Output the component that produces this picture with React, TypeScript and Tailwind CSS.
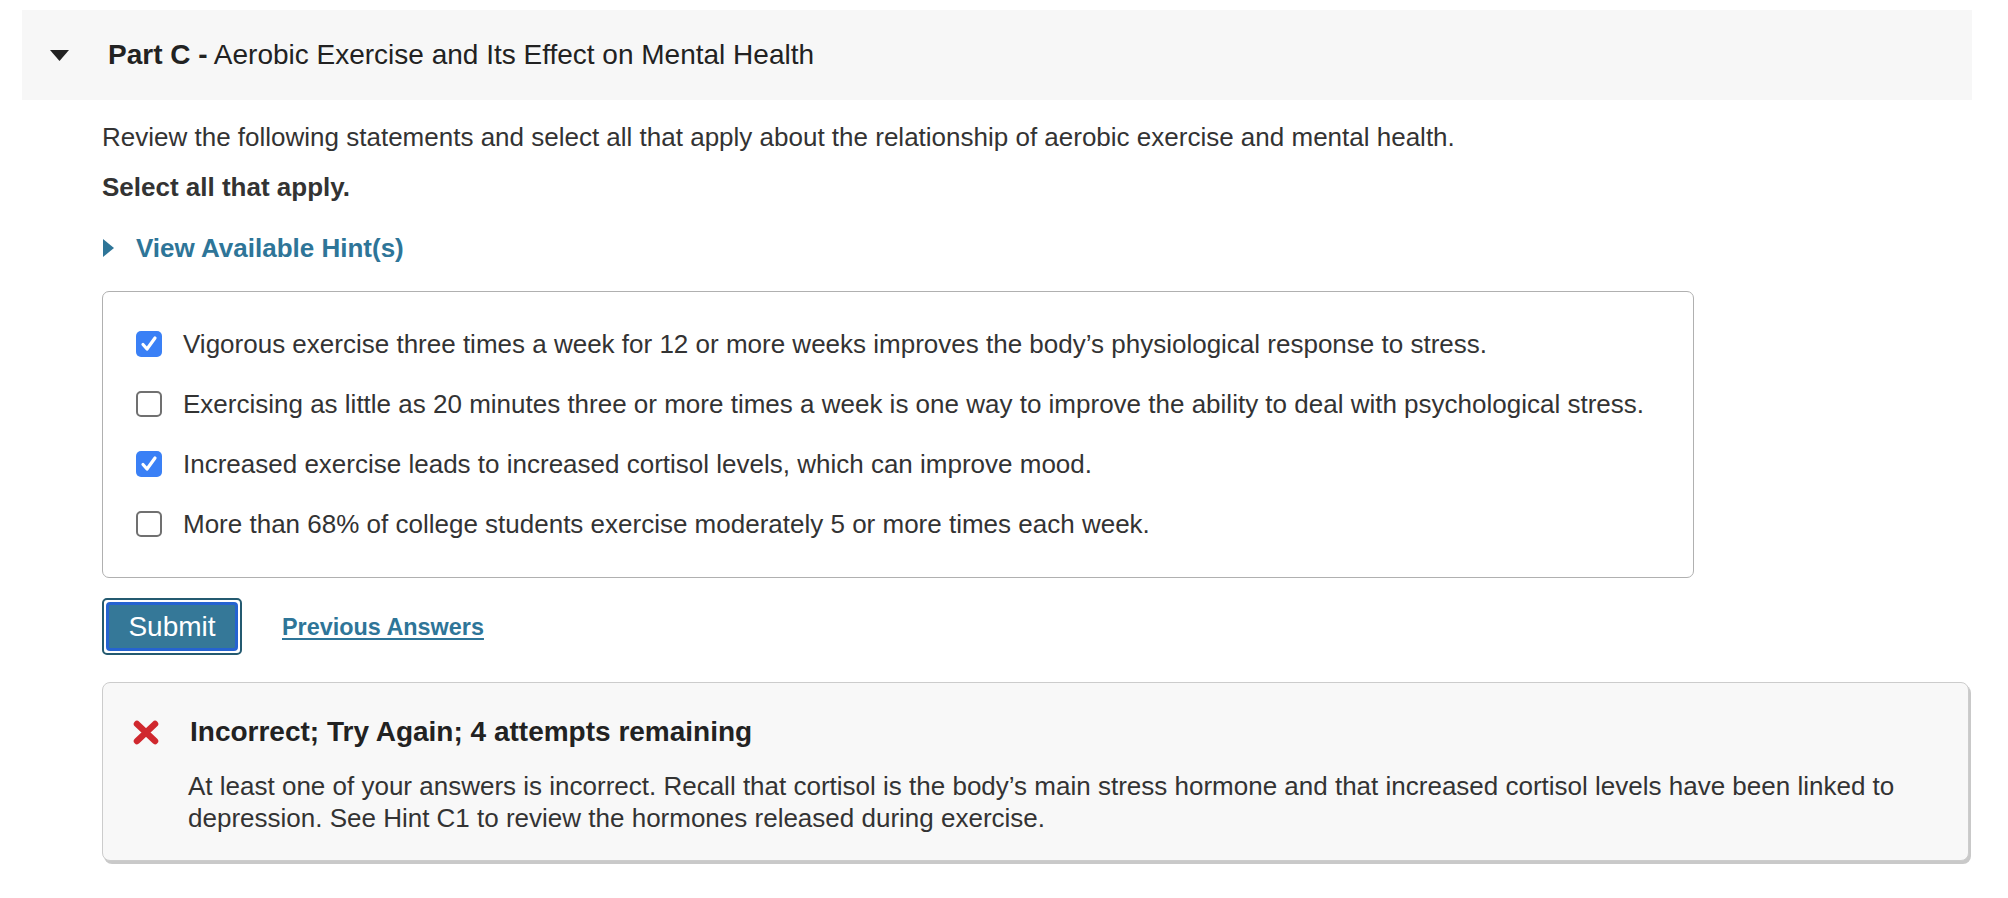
import React from "react";

const options = [
  {
    text: "Vigorous exercise three times a week for 12 or more weeks improves the body\u2019s physiological response to stress.",
    checked: true,
  },
  {
    text: "Exercising as little as 20 minutes three or more times a week is one way to improve the ability to deal with psychological stress.",
    checked: false,
  },
  {
    text: "Increased exercise leads to increased cortisol levels, which can improve mood.",
    checked: true,
  },
  {
    text: "More than 68% of college students exercise moderately 5 or more times each week.",
    checked: false,
  },
];

function Checkbox({ checked }: { checked: boolean }) {
  if (checked) {
    return (
      <span className="flex h-[26px] w-[26px] shrink-0 items-center justify-center rounded-[5px] bg-[#3a80f6]">
        <svg viewBox="0 0 26 26" className="h-[26px] w-[26px]">
          <path
            d="M7 13.5l4 4.5 8-11"
            fill="none"
            stroke="white"
            strokeWidth="3.2"
            strokeLinecap="round"
            strokeLinejoin="round"
          />
        </svg>
      </span>
    );
  }
  return (
    <span className="h-[26px] w-[26px] shrink-0 rounded-[5px] border-[2px] border-[#707070] bg-white" />
  );
}

export default function App() {
  return (
    <div
      className="min-h-[898px] w-full bg-white pt-[10px] text-[#333333]"
      style={{ fontFamily: '"Liberation Sans", Arial, Helvetica, sans-serif' }}
    >
      {/* Part header */}
      <div className="ml-[22px] mr-[36px] flex h-[90px] items-center bg-[#f7f7f7]">
        <svg viewBox="0 0 19 11" className="ml-[28px] h-[11px] w-[19px]">
          <path d="M0 0h19L9.5 11z" fill="#222222" />
        </svg>
        <h2 className="ml-[39px] text-[28px] leading-[32px] text-[#222222]">
          <span className="font-bold">Part C -</span> Aerobic Exercise and Its
          Effect on Mental Health
        </h2>
      </div>

      <div className="pl-[102px]">
        <p className="mt-[21px] text-[26px] leading-[32px]">
          Review the following statements and select all that apply about the
          relationship of aerobic exercise and mental health.
        </p>
        <p className="mt-[18px] text-[26px] font-bold leading-[32px]">
          Select all that apply.
        </p>

        {/* Hints */}
        <div className="mt-[29px] flex items-center">
          <svg viewBox="0 0 11 18" className="ml-[1px] h-[18px] w-[11px]">
            <path d="M0 0l11 9-11 9z" fill="#2e7598" />
          </svg>
          <span className="ml-[22px] text-[26px] font-bold leading-[32px] text-[#2e7598]">
            View Available Hint(s)
          </span>
        </div>

        {/* Answer options */}
        <div className="mt-[27px] w-[1592px] rounded-[7px] border border-[#b0b0b0] px-[33px] pb-[23px] pt-[22px]">
          {options.map((opt) => (
            <label key={opt.text} className="flex h-[60px] items-center gap-[21px]">
              <Checkbox checked={opt.checked} />
              <span className="text-[26px] leading-[32px]">{opt.text}</span>
            </label>
          ))}
        </div>

        {/* Actions */}
        <div className="mt-[20px] flex items-center">
          <div className="rounded-[5px] border-[2px] border-[#245a70] bg-white p-[2px]">
            <button className="flex h-[49px] w-[132px] items-center justify-center rounded-[4px] border-[3px] border-[#2563d1] bg-[#357898] text-[28px] text-white">
              Submit
            </button>
          </div>
          <a className="ml-[40px] text-[23.4px] font-bold leading-[28px] text-[#2e7598] underline underline-offset-[3px]">
            Previous Answers
          </a>
        </div>

        {/* Feedback */}
        <div className="mr-[39px] mt-[27px] rounded-[8px] border border-[#cccccc] bg-[#f8f8f8] pb-[26px] pl-[29px] pr-[20px] pt-[33px] shadow-[2px_3px_0_#c9c9c9]">
          <div className="flex items-center">
            <svg viewBox="0 0 28 25" className="h-[25px] w-[28px]">
              <path
                d="M5 4l18 17M23 4L5 21"
                stroke="#d0282e"
                strokeWidth="6.5"
                strokeLinecap="round"
              />
            </svg>
            <span className="ml-[30px] text-[28px] font-bold leading-[32px] text-[#222222]">
              Incorrect; Try Again; 4 attempts remaining
            </span>
          </div>
          <p className="ml-[56px] mt-[22px] text-[26px] leading-[32px]">
            At least one of your answers is incorrect. Recall that cortisol is
            the body&rsquo;s main stress hormone and that increased cortisol
            levels have been linked to
            <br />
            depression. See Hint C1 to review the hormones released during
            exercise.
          </p>
        </div>
      </div>
    </div>
  );
}
